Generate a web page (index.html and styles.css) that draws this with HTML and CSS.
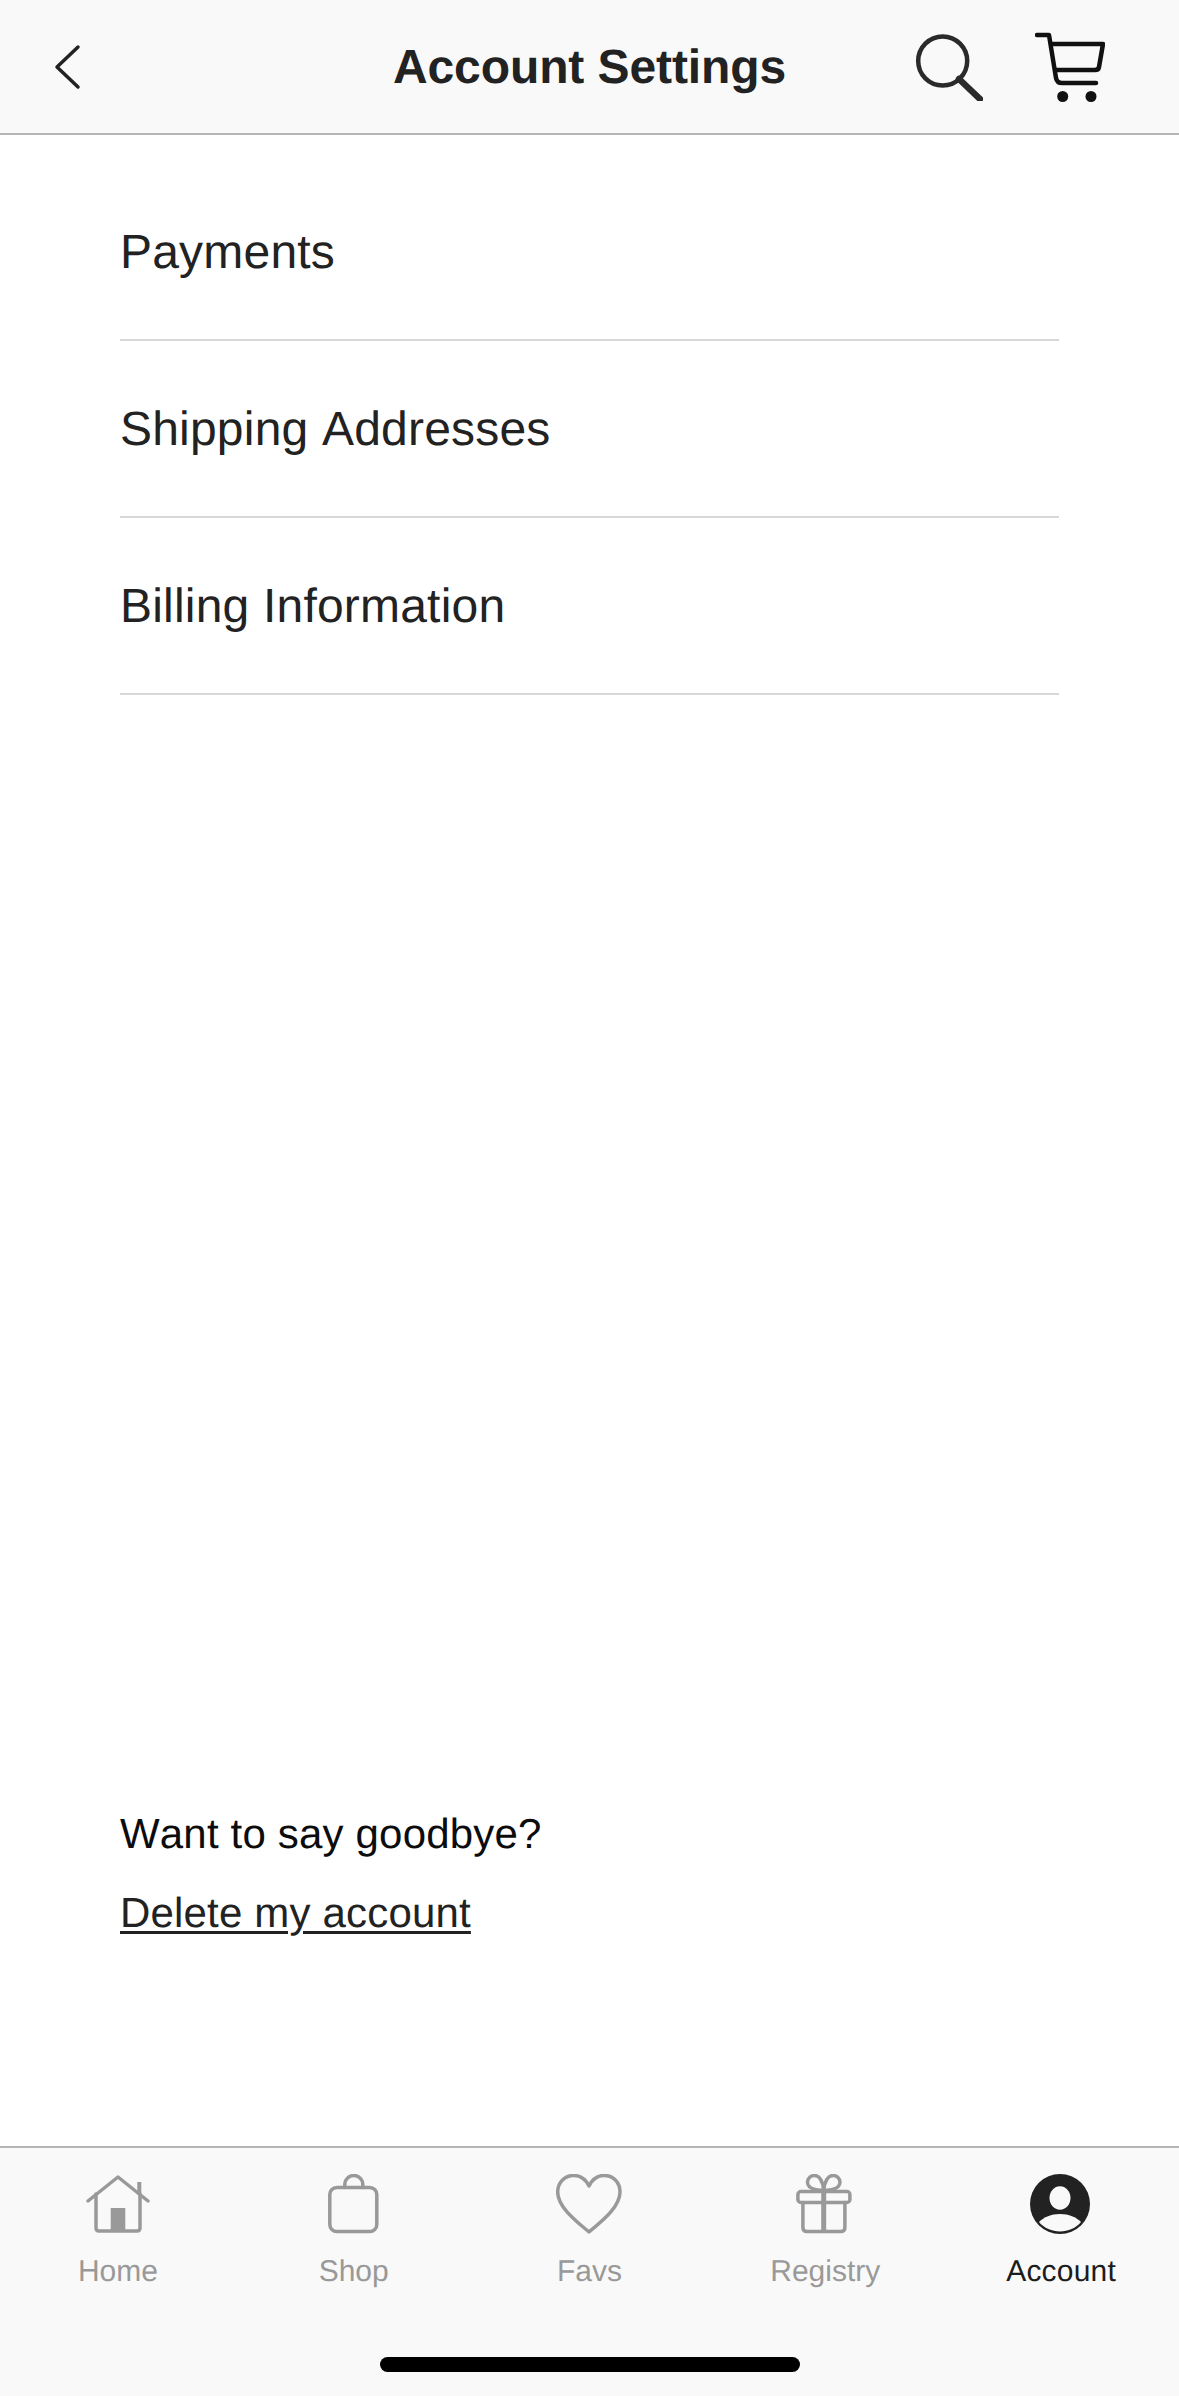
FILE: index.html
```html
<!DOCTYPE html>
<html lang="en">
<head>
    <meta charset="UTF-8">
    <meta name="viewport" content="width=device-width, initial-scale=1.0">
    <title>Account Settings</title>
    <link rel="stylesheet" href="styles.css">
</head>
<body>
    <div class="app">
        <header class="top-bar">
            <div class="top-left">
                <svg class="icon-back" width="30" height="46" viewBox="0 0 30 46">
                    <path d="M26 3 5 23l21 20"/>
                </svg>
            </div>
            <h1 class="top-title">Account Settings</h1>
            <div class="top-right">
                <svg class="icon-search" width="68" height="68" viewBox="0 0 68 68">
                    <circle cx="27.7" cy="28" r="24.5"/>
                    <path class="handle" d="M44 46 65 66"/>
                </svg>
                <svg class="icon-cart" width="70" height="72" viewBox="0 0 70 72">
                    <path d="M2 4H14L21 47Q22 52 27 52H61"/>
                    <path d="M16 13H68L64 36Q63.500 39 60 39H21"/>
                    <circle class="wheel" cx="27.700" cy="65.500" r="5.500"/>
                    <circle class="wheel" cx="56" cy="65.500" r="5.500"/>
                </svg>
            </div>
        </header>

        <main class="content">
            <ul class="settings-list">
                <li class="settings-item">Payments</li>
                <li class="settings-item">Shipping Addresses</li>
                <li class="settings-item">Billing Information</li>
            </ul>
            <div class="goodbye">
                <p class="goodbye-text">Want to say goodbye?</p>
                <a class="goodbye-link" href="#">Delete my account</a>
            </div>
        </main>

        <footer class="tab-bar">
            <nav class="tabs">
                <div class="tab">
                    <svg width="64" height="60" viewBox="0 0 64 60">
                        <path d="M2 27 32 3 62 27"/>
                        <path d="M10 20V54Q10 57 13 57H51Q54 57 54 54V20"/>
                        <rect class="solid" x="24.700" y="34" width="14.600" height="23"/>
                        <rect class="solid" x="51.300" y="8" width="4" height="13"/>
                    </svg>
                    <span class="tab-label">Home</span>
                </div>
                <div class="tab">
                    <svg width="60" height="60" viewBox="0 0 60 60">
                        <rect x="5.800" y="13.500" width="47" height="44" rx="7"/>
                        <path d="M20.800 13.500V10.500A9 9 0 0 1 38.800 10.500V13.500"/>
                    </svg>
                    <span class="tab-label">Shop</span>
                </div>
                <div class="tab">
                    <svg width="66" height="60" viewBox="0 0 66 60">
                        <path d="M33 58C20 47 1.700 33 1.700 18 1.700 8 9 1.500 18 1.500 25 1.500 30 6 33 12 36 6 41 1.500 48 1.500 57 1.500 64 8 64 18 64 33 46 47 33 58Z"/>
                    </svg>
                    <span class="tab-label">Favs</span>
                </div>
                <div class="tab">
                    <svg width="60" height="60" viewBox="0 0 60 60">
                        <path d="M28.700 16C24 17 13 15.500 12.500 8.500 12.500 4 16 1.500 19.500 1.500 24 1.500 27.500 6 28.700 16 30 6 33.500 1.500 38 1.500 41.500 1.500 45 4 45 8.500 44.500 15.500 33.500 17 28.700 16Z"/>
                        <rect x="2.900" y="17.500" width="52" height="11" rx="3"/>
                        <path d="M7.900 28.500V53.500Q7.900 57.500 11.900 57.500H45.900Q49.900 57.500 49.900 53.500V28.500"/>
                        <rect class="solid" x="26.200" y="16" width="5" height="41"/>
                    </svg>
                    <span class="tab-label">Registry</span>
                </div>
                <div class="tab active">
                    <svg width="62" height="60" viewBox="0 0 62 60">
                        <circle class="avatar" cx="30" cy="30" r="30"/>
                        <ellipse class="avatar-cut" cx="30" cy="24" rx="10.500" ry="11.700"/>
                        <path class="avatar-cut" d="M9 48C14 43 21 40 30 40S46 43 51 48C46 54 38 57.500 30 57.500S14 54 9 48Z"/>
                    </svg>
                    <span class="tab-label">Account</span>
                </div>
            </nav>
            <div class="home-indicator"></div>
        </footer>
    </div>
</body>
</html>
```

FILE: styles.css
```css
* {
    margin: 0;
    padding: 0;
    box-sizing: border-box;
}

body {
    font-family: "Liberation Sans", Arial, sans-serif;
    background: #fff;
    color: #222;
    text-rendering: geometricPrecision;
    font-kerning: none;
}

.app {
    width: 1179px;
    height: 2396px;
    display: flex;
    flex-direction: column;
    overflow: hidden;
}

/* top bar */
.top-bar {
    height: 135px;
    flex-shrink: 0;
    background: #f9f9f9;
    border-bottom: 2px solid #b5b5b5;
    display: grid;
    grid-template-columns: 1fr auto 1fr;
    align-items: center;
}

.top-left {
    padding-left: 52px;
    display: flex;
}

.top-title {
    font-size: 48px;
    font-weight: 700;
    line-height: 56px;
    letter-spacing: -0.1px;
    padding-top: 2px;
    color: #222;
}

.top-right {
    display: flex;
    align-items: center;
    justify-content: flex-end;
    gap: 52px;
    padding-right: 74px;
}

.top-bar svg {
    display: block;
    fill: none;
    stroke-linecap: round;
    stroke-linejoin: round;
}

.icon-back path {
    stroke: #222;
    stroke-width: 3.5;
}

.icon-search circle {
    stroke: #2a2a2a;
    stroke-width: 4.5;
}

.icon-search .handle {
    stroke: #2a2a2a;
    stroke-width: 6.5;
}

.icon-cart path {
    stroke: #111;
    stroke-width: 4.5;
}

.icon-cart .wheel {
    fill: #111;
}

/* main content */
.content {
    flex: 1;
    display: flex;
    flex-direction: column;
    padding-top: 29px;
}

.settings-list {
    list-style: none;
    margin: 0 120px;
}

.settings-item {
    height: 177px;
    padding-top: 2px;
    display: flex;
    align-items: center;
    font-size: 48px;
    letter-spacing: 0.2px;
    color: #222;
    border-bottom: 2px solid #d8d8d8;
}

.goodbye {
    margin-top: auto;
    padding: 0 120px 194px;
    display: flex;
    flex-direction: column;
    align-items: flex-start;
    font-size: 42px;
    line-height: 79px;
    letter-spacing: 0.18px;
}

.goodbye-text {
    color: #0c0c0c;
}

.goodbye-link {
    color: #222;
    text-decoration: underline;
    text-decoration-thickness: 3px;
    text-underline-offset: 4px;
}

/* bottom tabs */
.tab-bar {
    height: 250px;
    flex-shrink: 0;
    background: #f9f9f9;
    border-top: 2px solid #b5b5b5;
    padding-top: 26px;
}

.tabs {
    display: grid;
    grid-template-columns: repeat(5, 1fr);
}

.tab {
    display: flex;
    flex-direction: column;
    align-items: center;
    gap: 20px;
    color: #999;
}

.tab svg {
    display: block;
    fill: none;
    stroke: #999;
    stroke-width: 3.5;
    stroke-linecap: round;
    stroke-linejoin: round;
}

.tab .solid {
    fill: #999;
    stroke: none;
}

.tab .avatar {
    fill: #222;
    stroke: none;
}

.tab .avatar-cut {
    fill: #f9f9f9;
    stroke: none;
}

.tab-label {
    font-size: 30px;
    line-height: 36px;
}

.tab.active {
    color: #1c1c1c;
    letter-spacing: 0.2px;
}

.home-indicator {
    width: 420px;
    height: 15px;
    margin: 67px auto 0;
    background: #000;
    border-radius: 8px;
}
```
